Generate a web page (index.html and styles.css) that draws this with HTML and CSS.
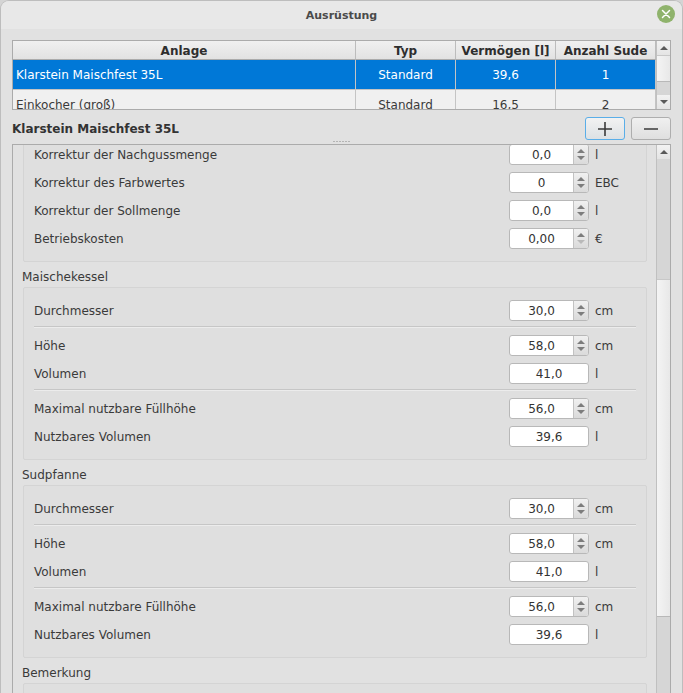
FILE: index.html
```html
<!DOCTYPE html>
<html lang="de">
<head>
<meta charset="utf-8">
<title>Ausrüstung</title>
<link rel="stylesheet" href="styles.css">
</head>
<body>
<div class="window">
  <header class="titlebar">
    <span class="title">Ausrüstung</span>
    <span class="close"><svg width="16" height="16" viewBox="0 0 16 16"><path d="M4.5 4.5l7 7M11.5 4.5l-7 7" stroke="#fff" stroke-width="1.5" stroke-linecap="round" fill="none"/></svg></span>
  </header>
  <main class="content">
    <div class="table-frame">
      <div class="table">
        <div class="hcell first">Anlage</div><div class="hcell">Typ</div><div class="hcell">Vermögen [l]</div><div class="hcell">Anzahl Sude</div>
        <div class="cell sel first">Klarstein Maischfest 35L</div><div class="cell sel">Standard</div><div class="cell sel">39,6</div><div class="cell sel">1</div>
        <div class="cell first">Einkocher (groß)</div><div class="cell">Standard</div><div class="cell">16,5</div><div class="cell">2</div>
      </div>
      <div class="vscroll">
        <div class="sb-btn"><i class="tri up"></i></div>
        <div class="sb-handle t-handle"></div>
        <div class="sb-groove"></div>
        <div class="sb-btn"><i class="tri down"></i></div>
      </div>
    </div>
    <div class="toolbar">
      <strong class="name">Klarstein Maischfest 35L</strong>
      <button class="tool focus"><svg width="16" height="16" viewBox="0 0 16 16"><path d="M8 1v14M1 8h14" stroke="#3a3a3a" stroke-width="1.6" fill="none"/></svg></button>
      <button class="tool"><svg width="16" height="16" viewBox="0 0 16 16"><path d="M1 8h14" stroke="#3a3a3a" stroke-width="1.6" fill="none"/></svg></button>
    </div>
    <div class="splitter"><i></i><i></i><i></i><i></i><i></i><i></i></div>
    <div class="scroll-area">
      <div class="scroll-content">
        <section class="group">
          <div class="row"><span class="lbl">Korrektur der Nachgussmenge</span><span class="spin"><span class="val">0,0</span><span class="btns"><i class="ar up"></i><i class="ar down"></i></span></span><span class="unit">l</span></div>
          <div class="row"><span class="lbl">Korrektur des Farbwertes</span><span class="spin"><span class="val">0</span><span class="btns"><i class="ar up"></i><i class="ar down"></i></span></span><span class="unit">EBC</span></div>
          <div class="row"><span class="lbl">Korrektur der Sollmenge</span><span class="spin"><span class="val">0,0</span><span class="btns"><i class="ar up"></i><i class="ar down"></i></span></span><span class="unit">l</span></div>
          <div class="row"><span class="lbl">Betriebskosten</span><span class="spin"><span class="val">0,00</span><span class="btns"><i class="ar up"></i><i class="ar down off"></i></span></span><span class="unit">€</span></div>
        </section>
        <h2 class="glabel">Maischekessel</h2>
        <section class="group">
          <div class="row"><span class="lbl">Durchmesser</span><span class="spin"><span class="val">30,0</span><span class="btns"><i class="ar up"></i><i class="ar down"></i></span></span><span class="unit">cm</span></div>
          <hr class="sep">
          <div class="row"><span class="lbl">Höhe</span><span class="spin"><span class="val">58,0</span><span class="btns"><i class="ar up"></i><i class="ar down"></i></span></span><span class="unit">cm</span></div>
          <div class="row"><span class="lbl">Volumen</span><span class="spin"><span class="val">41,0</span></span><span class="unit">l</span></div>
          <hr class="sep">
          <div class="row"><span class="lbl">Maximal nutzbare Füllhöhe</span><span class="spin"><span class="val">56,0</span><span class="btns"><i class="ar up"></i><i class="ar down"></i></span></span><span class="unit">cm</span></div>
          <div class="row"><span class="lbl">Nutzbares Volumen</span><span class="spin"><span class="val">39,6</span></span><span class="unit">l</span></div>
        </section>
        <h2 class="glabel">Sudpfanne</h2>
        <section class="group">
          <div class="row"><span class="lbl">Durchmesser</span><span class="spin"><span class="val">30,0</span><span class="btns"><i class="ar up"></i><i class="ar down"></i></span></span><span class="unit">cm</span></div>
          <hr class="sep">
          <div class="row"><span class="lbl">Höhe</span><span class="spin"><span class="val">58,0</span><span class="btns"><i class="ar up"></i><i class="ar down"></i></span></span><span class="unit">cm</span></div>
          <div class="row"><span class="lbl">Volumen</span><span class="spin"><span class="val">41,0</span></span><span class="unit">l</span></div>
          <hr class="sep">
          <div class="row"><span class="lbl">Maximal nutzbare Füllhöhe</span><span class="spin"><span class="val">56,0</span><span class="btns"><i class="ar up"></i><i class="ar down"></i></span></span><span class="unit">cm</span></div>
          <div class="row"><span class="lbl">Nutzbares Volumen</span><span class="spin"><span class="val">39,6</span></span><span class="unit">l</span></div>
        </section>
        <h2 class="glabel">Bemerkung</h2>
        <section class="group tall"></section>
      </div>
      <div class="vscroll main">
        <div class="sb-btn"><i class="tri up"></i></div>
        <div class="sb-groove g1"></div>
        <div class="sb-handle m-handle"></div>
        <div class="sb-groove"></div>
      </div>
    </div>
  </main>
</div>
</body>
</html>
```

FILE: styles.css
```css
* { box-sizing: border-box; }
html, body { margin: 0; height: 100%; overflow: hidden; background: #d4d4d4; }
body { font: 12px/15px "DejaVu Sans", sans-serif; color: #3a3a3a; }

.window {
  height: 693px;
  display: flex;
  flex-direction: column;
  background: #e1e1e1;
  border: 1px solid #bdbdbd;
  border-bottom: 0;
  border-radius: 9px 9px 0 0;
  overflow: hidden;
}

.titlebar {
  height: 28px;
  flex: none;
  display: flex;
  align-items: center;
  justify-content: center;
  position: relative;
  background: #e8e8e8;
}
.title { font-size: 11px; font-weight: bold; color: #4b4b4b; }
.close {
  position: absolute;
  right: 7px;
  top: 4px;
  width: 18px;
  height: 18px;
  border-radius: 50%;
  background: #8fb36c;
  display: flex;
  align-items: center;
  justify-content: center;
}

.content {
  flex: 1;
  min-height: 0;
  display: flex;
  flex-direction: column;
  padding: 11px 11px 0;
}

/* table */
.table-frame {
  height: 70px;
  flex: none;
  display: flex;
  border: 1px solid #ababab;
  overflow: hidden;
  background: #f0f0f0;
}
.table {
  flex: none;
  width: 643px;
  display: grid;
  grid-template-columns: 343px 100px 100px 100px;
  grid-template-rows: 19px 30px 30px;
}
.hcell {
  font-weight: bold;
  color: #2e2e2e;
  text-align: center;
  line-height: 20px;
  background: linear-gradient(#f0f0f0, #e2e2e2);
  border-right: 1px solid #bcbcbc;
  border-bottom: 1px solid #ababab;
}
.cell {
  text-align: center;
  padding-top: 2px;
  line-height: 27px;
  border-right: 1px solid #c4c4c4;
  border-bottom: 1px solid #c4c4c4;
}
.cell.first { text-align: left; padding-left: 3px; }
.cell.sel { background: #0078d7; color: #fff; }

.vscroll {
  flex: none;
  width: 14px;
  display: flex;
  flex-direction: column;
  border-left: 1px solid #c0c0c0;
  background: #d6d6d6;
}
.sb-btn {
  height: 14px;
  flex: none;
  display: flex;
  align-items: center;
  justify-content: center;
  background: linear-gradient(#f2f2f2, #e4e4e4);
}
.tri { width: 0; height: 0; border-left: 4px solid transparent; border-right: 4px solid transparent; }
.tri.up { border-bottom: 4px solid #5a5a5a; }
.tri.down { border-top: 4px solid #5a5a5a; }
.sb-handle {
  flex: none;
  background: linear-gradient(90deg, #f4f4f4, #e8e8e8);
  border-top: 1px solid #c8c8c8;
  border-bottom: 1px solid #b8b8b8;
}
.t-handle { height: 27px; }
.sb-groove { flex: 1; background: #d6d6d6; }
.sb-groove.g1 { flex: none; height: 120px; }
.m-handle { height: 338px; }

/* toolbar */
.toolbar {
  flex: none;
  display: flex;
  align-items: center;
  gap: 6px;
  margin-top: 7px;
  height: 23px;
}
.name { flex: 1; font-weight: bold; color: #333; padding-top: 2px; }
.tool {
  width: 40px;
  height: 23px;
  padding: 0;
  display: flex;
  align-items: center;
  justify-content: center;
  border: 1px solid #aeaeae;
  border-radius: 3px;
  background: linear-gradient(#f0f0f0, #dfdfdf);
}
.tool.focus { border-color: #5aaee8; background: linear-gradient(#f2f2f2, #dde1e4); }

/* splitter */
.splitter {
  flex: none;
  height: 4px;
  display: flex;
  justify-content: center;
  align-items: flex-start;
  gap: 1px;
}
.splitter i { width: 2px; height: 1px; margin-top: 1px; background: #b4b4b4; }

/* scroll area */
.scroll-area {
  flex: 1;
  min-height: 0;
  display: flex;
  border: 1px solid #ababab;
  border-bottom: 0;
  overflow: hidden;
}
.scroll-content {
  flex: none;
  width: 643px;
  margin-top: -14px;
  padding: 0 9px 0 10px;
}
.group {
  background: #dfdfdf;
  border: 1px solid #d4d4d4;
  border-radius: 2px;
  padding: 12px 10px;
  display: flex;
  flex-direction: column;
  gap: 7px;
}
.group.tall { height: 200px; }
.glabel {
  margin: 0 0 0 -1px;
  height: 25px;
  padding-top: 8px;
  font: inherit;
  color: #3a3a3a;
}
.row { display: flex; align-items: center; height: 21px; }
.lbl { width: 475px; flex: none; padding-top: 2px; }
.spin {
  flex: none;
  width: 80px;
  height: 21px;
  display: flex;
  background: #fff;
  border: 1px solid #b8b8b8;
  border-radius: 3px;
  overflow: hidden;
}
.val { flex: 1; text-align: center; line-height: 21px; color: #333; }
.btns {
  flex: none;
  width: 15px;
  display: flex;
  flex-direction: column;
  align-items: center;
  justify-content: center;
  gap: 3px;
  border-left: 1px solid #c2c2c2;
  background: linear-gradient(#f0f0f0, #dadada);
}
.ar { width: 0; height: 0; border-left: 4px solid transparent; border-right: 4px solid transparent; }
.ar.up { border-bottom: 4px solid #7d7d7d; }
.ar.down { border-top: 4px solid #7d7d7d; }
.ar.down.off { border-top-color: #b9b9b9; }
.unit { margin-left: 6px; padding-top: 2px; }
.sep { flex: none; width: 100%; height: 2px; margin: -2px 0 0; border: 0; border-top: 1px solid #c6c6c6; border-bottom: 1px solid #ececec; }
```
